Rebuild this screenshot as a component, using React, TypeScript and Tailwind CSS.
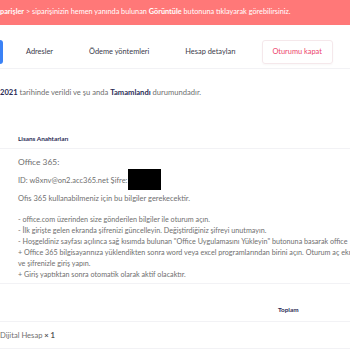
const steps = [
    '- office.com üzerinden size gönderilen bilgiler ile oturum açın.',
    '- İlk girişte gelen ekranda şifrenizi güncelleyin. Değiştirdiğiniz şifreyi unutmayın.',
    '- Hoşgeldiniz sayfası açılınca sağ kısımda bulunan "Office Uygulamasını Yükleyin" butonuna basarak office',
    '+ Office 365 bilgisayarınıza yüklendikten sonra word veya excel programlarından birini açın. Oturum aç ekranında',
    've şifrenizle giriş yapın.',
    '+ Giriş yaptıktan sonra otomatik olarak aktif olacaktır.',
];

const App = () => {
    return (
        <div className="w-[350px] h-[350px] overflow-hidden bg-white font-['Lato',sans-serif] text-[#6f6f6f]">
            {/* notice */}
            <div className="h-[25px] bg-[#ff7878] flex items-center text-white text-[7.3px] whitespace-nowrap">
                <span>
                    <b className="font-bold">parişler</b> &gt; siparişinizin hemen yanında bulunan{' '}
                    <b className="font-bold">Görüntüle</b> butonuna tıklayarak görebilirsiniz.
                </span>
            </div>

            {/* account tabs */}
            <div className="mt-[15px] pb-[4px] border-b border-[#f2f2f5]">
                <div className="flex items-center h-[24px] text-[7.4px] text-[#3a3a4a] whitespace-nowrap">
                    <div className="w-[3px] h-[24px] bg-[#3b82f6] rounded-r-[3px]" />
                    <span className="ml-[23px]">Adresler</span>
                    <span className="ml-[36px]">Ödeme yöntemleri</span>
                    <span className="ml-[36px]">Hesap detayları</span>
                    <button className="ml-[26px] h-[24px] w-[71px] flex items-center justify-center border border-[#f5e8eb] rounded-[3px] text-[#ec3f6b] shadow-[0_1px_2px_rgba(0,0,0,0.03)]">
                        Oturumu kapat
                    </button>
                </div>
            </div>

            <p className="mt-[18px] leading-[11px] text-[7.6px] whitespace-nowrap">
                <b className="font-bold text-[#2a2c55]">2021</b> tarihinde verildi ve şu anda{' '}
                <b className="font-bold text-[#2a2c55]">Tamamlandı</b> durumundadır.
            </p>

            {/* license keys */}
            <div className="mt-[36px] pb-[4px] border-b border-[#f2f2f5]">
                <div className="pl-[18px] leading-[10px] text-[6.4px] font-bold text-[#2a2c55]">Lisans Anahtarları</div>
            </div>

            <div className="pl-[18px] pb-[3px] border-b border-[#f2f2f5] whitespace-nowrap">
                <div className="mt-[8px] leading-[11px] text-[8.4px]">Office 365:</div>
                <div className="mt-[1px] flex items-center h-[21px] text-[7.5px]">
                    <span className="mt-[3px]">ID: w8xnv@on2.acc365.net Şifre: </span>
                    <span className="ml-[1px] w-[33px] h-[21px] bg-black" />
                </div>
                <div className="mt-[3px] leading-[11px] text-[7.5px]">Ofis 365 kullanabilmeniz için bu bilgiler gerekecektir.</div>
                <div className="mt-[10px] text-[7.2px]">
                    {steps.map((s, i) => (
                        <div key={i} className="leading-[11px]">{s}</div>
                    ))}
                </div>
            </div>

            {/* order totals */}
            <div className="mt-[21px] pb-[6px] border-b border-[#f2f2f5] flex">
                <div className="flex-1" />
                <div className="w-[72px] leading-[10px] text-[6.4px] font-bold text-[#2a2c55]">Toplam</div>
            </div>
            <div className="mt-[8px] pb-[7px] border-b border-[#f2f2f5]">
                <div className="leading-[11px] text-[7.6px]">
                    Dijital Hesap <b className="font-bold text-[#555]">× 1</b>
                </div>
            </div>
        </div>
    );
};

export default App;
